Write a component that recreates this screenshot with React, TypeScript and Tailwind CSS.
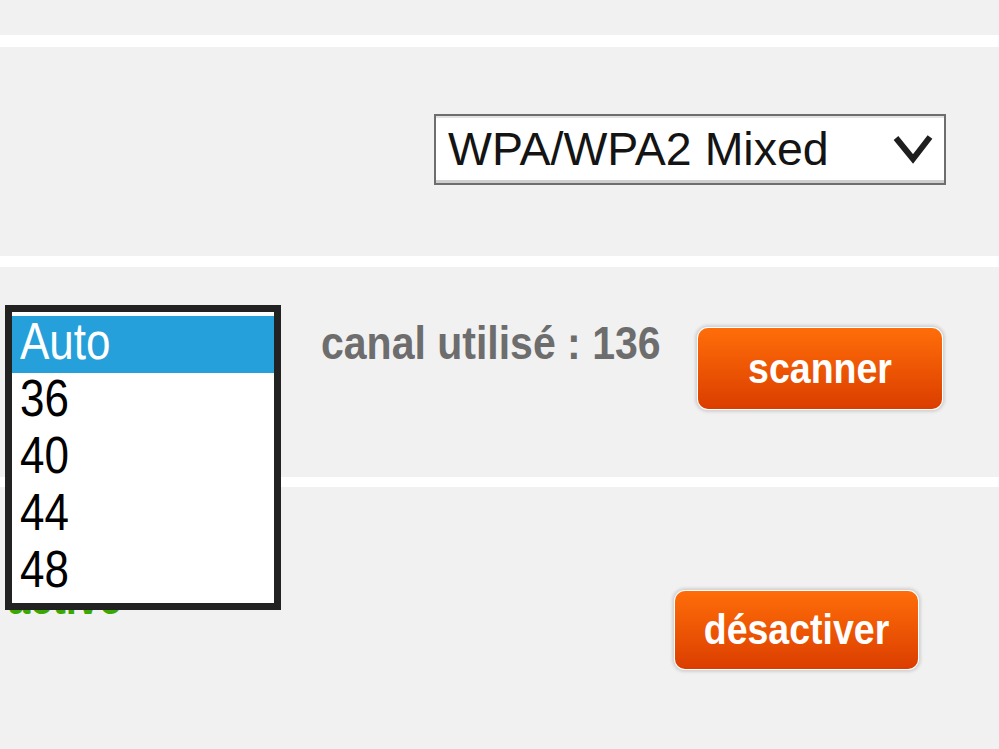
const CHANNELS = ["Auto", "36", "40", "44", "48"];

function OrangeButton({ label, className }: { label: string; className: string }) {
    return (
        <button
            className={`flex items-center justify-center rounded-[10px] bg-gradient-to-b from-[#ff6d0a] to-[#db3d00] shadow-[0_0_0_1px_#ffffff,0_0_3px_3px_#d2d2d2] ${className}`}
        >
            <span className="inline-block scale-y-[1.13] text-[37.5px] leading-none font-bold text-white">
                {label}
            </span>
        </button>
    );
}

export default function App() {
    return (
        <div className="min-h-screen w-[999px] overflow-hidden bg-[#f1f1f1] font-['Liberation_Sans',Arial,sans-serif]">
            <div className="h-[35px]" />
            <div className="h-[12px] bg-white" />

            {/* Security mode */}
            <section className="flex h-[209px] items-center justify-end pr-[53px]">
                <div className="-mt-[4px] flex h-[71px] w-[512px] items-center justify-between border-2 border-[#6e6e6e] bg-white pr-[11px] pl-[12px] shadow-[inset_0_-3px_0_#cfcfcf,inset_0_2px_0_#e2e2e2]">
                    <span className="inline-block text-[46.5px] leading-none text-[#141414]">
                        WPA/WPA2 Mixed
                    </span>
                    <svg width="40" height="30" viewBox="0 0 40 30" className="-mt-[2px]">
                        <polyline
                            points="3,4 20,25 37,3"
                            fill="none"
                            stroke="#1e1e1e"
                            strokeWidth="6"
                            strokeLinejoin="miter"
                        />
                    </svg>
                </div>
            </section>

            <div className="h-[11px] bg-white" />

            {/* Channel */}
            <section className="relative flex h-[210px] items-start pl-[321px]">
                <span className="mt-[56px] inline-block scale-y-[1.12] text-[41px] leading-none font-bold text-[#6d6d6d]">
                    canal utilisé : 136
                </span>
                <OrangeButton label="scanner" className="mt-[61px] mr-[57px] ml-auto h-[81px] w-[244px]" />

                {/* open channel list */}
                <div className="absolute top-[38px] left-[5px] z-10 h-[305px] w-[276px] border-[7px] border-[#222222] bg-white pt-[4px]">
                    {CHANNELS.map((c, i) => (
                        <div
                            key={c}
                            className={`flex h-[57px] items-center pl-[8px] ${i === 0 ? "bg-[#25a0da] text-white" : "text-black"}`}
                        >
                            <span className="-mt-[5px] inline-block scale-y-[1.16] text-[44px] leading-none">
                                {c}
                            </span>
                        </div>
                    ))}
                </div>
            </section>

            <div className="h-[10px] bg-white" />

            {/* Wifi state */}
            <section className="flex h-[262px] items-start pl-[8px]">
                <span className="mt-[91px] inline-block scale-y-[1.12] text-[40px] leading-none font-bold text-[#3aa800]">
                    activé
                </span>
                <OrangeButton label="désactiver" className="mt-[104px] mr-[81px] ml-auto h-[78px] w-[243px]" />
            </section>
        </div>
    );
}
